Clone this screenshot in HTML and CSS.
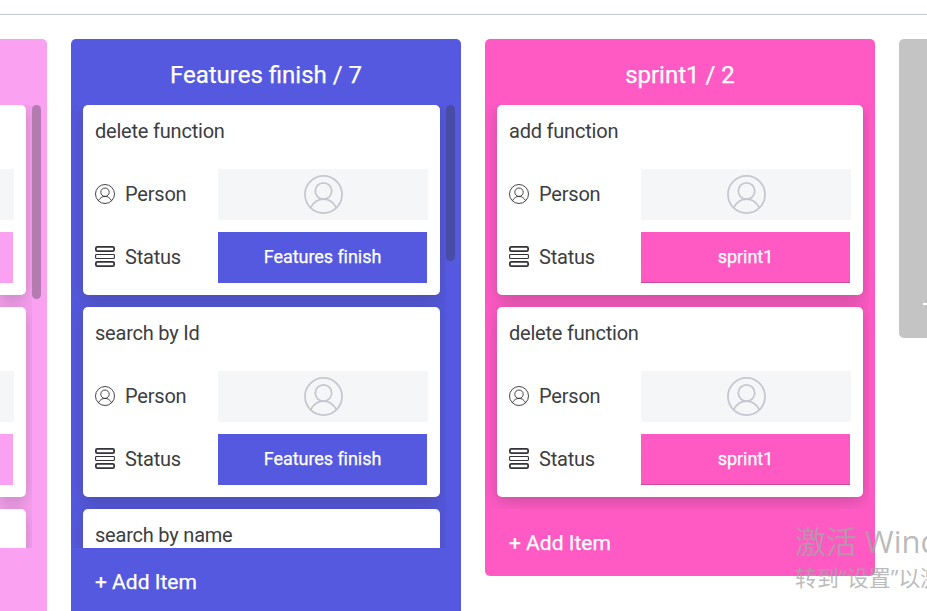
FILE: index.html
```html
<!DOCTYPE html>
<html lang="zh-CN">
<head>
<meta charset="utf-8">
<title>Board</title>
<link rel="stylesheet" href="styles.css">
</head>
<body>
<svg class="defs" aria-hidden="true">
  <symbol id="person" viewBox="0 0 20 20">
    <circle cx="10" cy="10" r="9.5"/>
    <circle cx="10" cy="8.2" r="4.2"/>
    <path d="M3.4 16.8C5 13.8 7.2 12.4 10 12.4s5 1.4 6.6 4.4"/>
  </symbol>
  <symbol id="status" viewBox="0 0 20 21">
    <rect x=".9" y=".9" width="18.2" height="4.2" rx="1.4" stroke-width="1.8"/>
    <rect x=".6" y="8.5" width="18.8" height="4" rx=".8" stroke-width="1.1"/>
    <rect x=".9" y="15.9" width="18.2" height="4.2" rx="1.4" stroke-width="1.8"/>
  </symbol>
</svg>
<header class="topbar"></header>
<main class="board" id="board"></main>
<aside class="watermark">
  <div class="watermark-title">激活 Windows</div>
  <div class="watermark-text">转到“设置”以激</div>
</aside>
<script src="board.js"></script>
</body>
</html>
```
FILE: styles.css
```css
* { box-sizing: border-box; }
body {
  margin: 0;
  height: 611px;
  overflow: hidden;
  background: #fff;
  color: #3c3d42;
  font-family: Roboto, "Noto Sans CJK SC", sans-serif;
}
.defs { position: absolute; width: 0; height: 0; }
.topbar { height: 15px; border-bottom: 1px solid #c5c7d0; }
.board {
  display: flex;
  align-items: flex-start;
  gap: 24px;
  padding-top: 24px;
}
.column {
  flex: 0 0 390px;
  border-radius: 5px;
  overflow: hidden;
  background: var(--tone);
}
.violet {
  --tone: #faa1f1;
  flex-basis: 47px;
  border-radius: 0 5px 5px 0;
}
.blue { --tone: #5559df; }
.pink { --tone: #ff5ac4; }
.column-title {
  height: 66px;
  padding-top: 6px;
  line-height: 60px;
  text-align: center;
  color: #fff;
  font-size: 24px;
  font-weight: 400;
  margin: 0;
  -webkit-text-stroke: .25px #fff;
}
.column-body { display: flex; padding-right: 6px; }
.list {
  flex: 1;
  padding: 0 6px 0 12px;
  overflow: hidden;
}
.scrolls .list { height: 443px; }
.violet .list { padding-left: 0; }
.scrollbar {
  width: 9px;
  height: 156px;
  border-radius: 5px;
  background: #323338;
  opacity: .35;
}
.violet .scrollbar { height: 194px; }
.card {
  height: 190px;
  margin-bottom: 12px;
  padding: 12px;
  border-radius: 5px;
  background: #fff;
  box-shadow: 0 4px 16px rgba(50, 51, 56, .28);
}
.violet .card { padding-left: 0; border-radius: 0 5px 5px 0; }
.card-title {
  height: 52px;
  line-height: 28px;
  font-size: 20px;
  letter-spacing: -.21px;
}
.row { display: flex; height: 51px; margin-bottom: 12px; }
.label {
  flex: 1;
  display: flex;
  align-items: center;
  gap: 10px;
  padding-bottom: 2px;
  font-size: 20px;
  letter-spacing: -.2px;
}
.icon { width: 20px; height: 20px; fill: none; stroke: #323338; stroke-width: .9; }
.icon.status { height: 21px; }
.cell {
  width: 210px;
  height: 51px;
  display: flex;
  align-items: center;
  justify-content: center;
  background: #f5f6f8;
}
.avatar { width: 39px; height: 39px; fill: none; stroke: #c5c7d0; stroke-width: .9; }
.cell.tag {
  width: 209px;
  margin-right: 1px;
  padding-bottom: 2px;
  background: var(--tone);
  color: #fff;
  font-size: 18px;
  letter-spacing: -.05px;
  -webkit-text-stroke: .25px #fff;
}
.violet .cell { width: 14px; }
.violet .cell.tag { width: 13px; }
.pink .tag { box-shadow: inset 0 -1px #cc489d; }
.add {
  height: 67px;
  padding-left: 24px;
  line-height: 69px;
  color: #fff;
  font-size: 21px;
  -webkit-text-stroke: .25px #fff;
}
.new-column {
  flex: 0 0 28px;
  height: 299px;
  display: flex;
  padding: 264px 0 0 24px;
  border-radius: 5px 0 0 5px;
  background: #c4c4c4;
}
.new-column span { width: 4px; height: 2px; background: #fff; }
.watermark {
  position: absolute;
  left: 795px;
  top: 521px;
  width: 132px;
  overflow: hidden;
  color: rgba(165, 165, 165, .75);
  font-family: "Open Sans", "Noto Sans CJK SC", sans-serif;
  font-weight: 400;
  white-space: nowrap;
}
.watermark-title { height: 41px; line-height: 41px; font-size: 31px; }
.watermark-text { height: 32px; line-height: 30px; font-size: 22px; }
```
FILE: board.js
```js
const columns = [
  { tone: "violet", scrolls: true, items: [null, null, null] },
  { tone: "blue", name: "Features finish", count: 7, scrolls: true, items: ["delete function", "search by Id", "search by name"] },
  { tone: "pink", name: "sprint1", count: 2, scrolls: false, items: ["add function", "delete function"] }
];

const label = (icon, text) =>
  `<div class="label"><svg class="icon ${icon}"><use href="#${icon}"/></svg>${text}</div>`;

const card = (title, status) => `
  <article class="card">
    <div class="card-title">${title || ""}</div>
    <div class="row">
      ${title ? label("person", "Person") : ""}
      <div class="cell">${title ? '<svg class="avatar"><use href="#person"/></svg>' : ""}</div>
    </div>
    <div class="row">
      ${title ? label("status", "Status") : ""}
      <div class="cell tag">${status || ""}</div>
    </div>
  </article>`;

const column = c => `
  <section class="column ${c.tone}${c.scrolls ? " scrolls" : ""}">
    <h2 class="column-title">${c.name ? `${c.name} / ${c.count}` : ""}</h2>
    <div class="column-body">
      <div class="list">${c.items.map(t => card(t, c.name)).join("")}</div>
      ${c.scrolls ? '<div class="scrollbar"></div>' : ""}
    </div>
    <div class="add">${c.name ? "+ Add Item" : ""}</div>
  </section>`;

document.getElementById("board").innerHTML =
  columns.map(column).join("") + '<section class="new-column"><span></span></section>';
```
